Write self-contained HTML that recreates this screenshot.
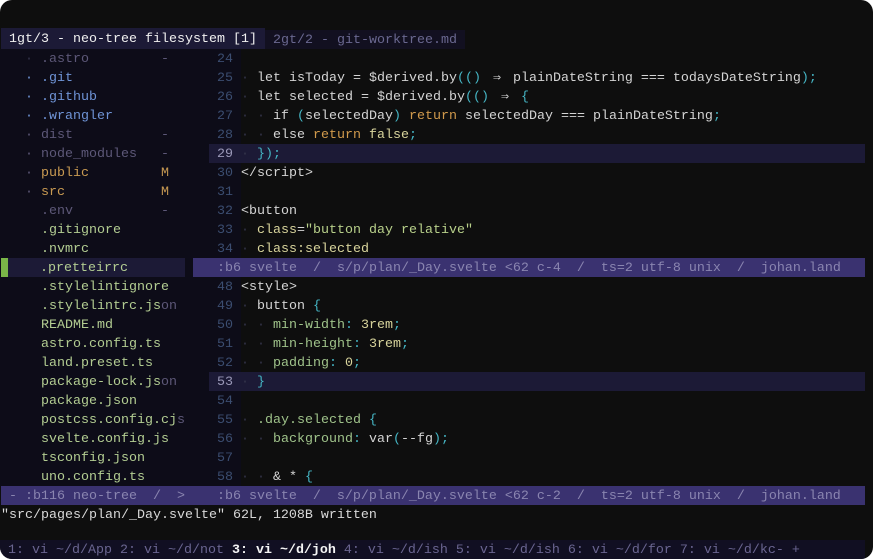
<!DOCTYPE html>
<html><head><meta charset="utf-8"><style>
*{margin:0;padding:0;box-sizing:border-box}
html,body{width:873px;height:559px;background:#fff;overflow:hidden}
#w{position:absolute;left:0;top:0;width:873px;height:559px;background:#0e0e0e;border-radius:12px;overflow:hidden;font-family:"Liberation Mono",monospace;font-size:13.333px;color:#d4d4d4}
#v{position:absolute;left:0;top:1px;width:873px;height:559px}
.r{position:absolute;height:19px;line-height:21px;white-space:pre}
.tree{position:absolute;left:0;top:48px;width:193px;height:437px;background:#0d0c18}
.gut{position:absolute;left:193px;top:48px;width:48px;height:437px;background:#0d0c18}
.d{color:#5d5878}.b{color:#6f94d6}.o{color:#c89a52}.g{color:#b3cd92}
.n{color:#3b4d70}.nc{color:#9a98b8}.i{color:#34344a}.c{color:#45b5c4}.k{color:#d19a4c}
.y{color:#d8d49c}.s{color:#b8d08a}.gr{color:#9fc28a}
.st{background:#3a3270;color:#8a85b0}
.a{display:inline-block;width:16px;text-align:center}
</style></head><body><div id="w"><div id="v">
<div class="tree"></div><div class="gut"></div>
<div class="r" style="left:1px;width:264px;background:#1c1a36;color:#f0f0f0;top:27px;height:21px;line-height:23px"> 1gt/3 - neo-tree filesystem [1] </div>
<div class="r" style="top:29px;left:265px;width:200px;background:#121020;color:#6a6890"> 2gt/2 - git-worktree.md </div>
<div class="r" style="left:1px;top:48px">   <span class="i">·</span> <span class="d">.astro         -</span></div>
<div class="r" style="left:1px;top:67px">   <span class="b">· .git</span></div>
<div class="r" style="left:1px;top:86px">   <span class="b">· .github</span></div>
<div class="r" style="left:1px;top:105px">   <span class="b">· .wrangler</span></div>
<div class="r" style="left:1px;top:124px">   <span class="d">· dist           -</span></div>
<div class="r" style="left:1px;top:143px">   <span class="d">· node_modules   -</span></div>
<div class="r" style="left:1px;top:162px">   <span class="d">·</span> <span class="o">public         M</span></div>
<div class="r" style="left:1px;top:181px">   <span class="d">·</span> <span class="o">src            M</span></div>
<div class="r" style="left:1px;top:200px">     <span class="d">.env           -</span></div>
<div class="r g" style="left:1px;top:219px">     .gitignore</div>
<div class="r g" style="left:1px;top:238px">     .nvmrc</div>
<div class="r" style="left:1px;top:257px;width:7px;background:#7ab648"></div>
<div class="r g" style="left:8px;top:257px;width:177px;background:#1c1a36">    .pretteirrc</div>
<div class="r g" style="left:1px;top:276px">     .stylelintignore</div>
<div class="r g" style="left:1px;top:295px">     .stylelintrc.js<span class="d">on</span></div>
<div class="r g" style="left:1px;top:314px">     README.md</div>
<div class="r g" style="left:1px;top:333px">     astro.config.ts</div>
<div class="r g" style="left:1px;top:352px">     land.preset.ts</div>
<div class="r g" style="left:1px;top:371px">     package-lock.js<span class="d">on</span></div>
<div class="r g" style="left:1px;top:390px">     package.json</div>
<div class="r g" style="left:1px;top:409px">     postcss.config.cj<span class="d">s</span></div>
<div class="r g" style="left:1px;top:428px">     svelte.config.js</div>
<div class="r g" style="left:1px;top:447px">     tsconfig.json</div>
<div class="r g" style="left:1px;top:466px">     uno.config.ts</div>
<div class="r" style="left:209px;top:143px;width:656px;background:#1c1a36"></div>
<div class="r" style="left:209px;top:371px;width:656px;background:#1c1a36"></div>
<div class="r" style="left:193px;top:48px"><span class="n">   24</span></div>
<div class="r" style="left:193px;top:67px"><span class="n">   25</span> <span class="i">·</span> let isToday = $derived.by<span class="c">(()</span> <span class="a">⇒</span> plainDateString === todaysDateString<span class="c">);</span></div>
<div class="r" style="left:193px;top:86px"><span class="n">   26</span> <span class="i">·</span> let selected = $derived.by<span class="c">(()</span> <span class="a">⇒</span> <span class="c">{</span></div>
<div class="r" style="left:193px;top:105px"><span class="n">   27</span> <span class="i">· ·</span> if <span class="c">(</span>selectedDay<span class="c">)</span> <span class="k">return</span> selectedDay === plainDateString<span class="c">;</span></div>
<div class="r" style="left:193px;top:124px"><span class="n">   28</span> <span class="i">· ·</span> else <span class="k">return</span> <span class="y">false</span><span class="c">;</span></div>
<div class="r" style="left:193px;top:143px"><span class="nc">   29</span> <span class="i">·</span> <span class="c">});</span></div>
<div class="r" style="left:193px;top:162px"><span class="n">   30</span> &lt;/script&gt;</div>
<div class="r" style="left:193px;top:181px"><span class="n">   31</span></div>
<div class="r" style="left:193px;top:200px"><span class="n">   32</span> &lt;button</div>
<div class="r" style="left:193px;top:219px"><span class="n">   33</span> <span class="i">·</span> <span class="y">class</span>=<span class="s">"button day relative"</span></div>
<div class="r" style="left:193px;top:238px"><span class="n">   34</span> <span class="i">·</span> <span class="y">class:selected</span></div>
<div class="r st" style="left:193px;top:257px;width:672px">   :b6 svelte  /  s/p/plan/_Day.svelte &lt;62 c-4  /  ts=2 utf-8 unix  /  johan.land</div>
<div class="r" style="left:193px;top:276px"><span class="n">   48</span> &lt;style&gt;</div>
<div class="r" style="left:193px;top:295px"><span class="n">   49</span> <span class="i">·</span> button <span class="c">{</span></div>
<div class="r" style="left:193px;top:314px"><span class="n">   50</span> <span class="i">· ·</span> <span class="gr">min-width</span><span class="c">:</span> <span class="y">3rem</span><span class="c">;</span></div>
<div class="r" style="left:193px;top:333px"><span class="n">   51</span> <span class="i">· ·</span> <span class="gr">min-height</span><span class="c">:</span> <span class="y">3rem</span><span class="c">;</span></div>
<div class="r" style="left:193px;top:352px"><span class="n">   52</span> <span class="i">· ·</span> <span class="gr">padding</span><span class="c">:</span> <span class="y">0</span><span class="c">;</span></div>
<div class="r" style="left:193px;top:371px"><span class="nc">   53</span> <span class="i">·</span> <span class="c">}</span></div>
<div class="r" style="left:193px;top:390px"><span class="n">   54</span></div>
<div class="r" style="left:193px;top:409px"><span class="n">   55</span> <span class="i">·</span> <span class="gr">.day.selected</span> <span class="c">{</span></div>
<div class="r" style="left:193px;top:428px"><span class="n">   56</span> <span class="i">· ·</span> <span class="gr">background</span><span class="c">:</span> var<span class="c">(</span>--fg<span class="c">);</span></div>
<div class="r" style="left:193px;top:447px"><span class="n">   57</span></div>
<div class="r" style="left:193px;top:466px"><span class="n">   58</span> <span class="i">· ·</span> &amp; * <span class="c">{</span></div>
<div class="r st" style="left:1px;top:485px;width:864px"> - :b116 neo-tree  /  &gt;    :b6 svelte  /  s/p/plan/_Day.svelte &lt;62 c-2  /  ts=2 utf-8 unix  /  johan.land</div>
<div class="r" style="left:1px;top:504px;color:#d8d8d8">"src/pages/plan/_Day.svelte" 62L, 1208B written</div>
<div class="r" style="left:0;top:539px;width:865px;height:20px;background:#110f22;color:#6a6590"> 1: vi ~/d/App 2: vi ~/d/not <span style="color:#f4f4f4;font-weight:bold">3: vi ~/d/joh</span> 4: vi ~/d/ish 5: vi ~/d/ish 6: vi ~/d/for 7: vi ~/d/kc- +</div>
</div></div></body></html>
